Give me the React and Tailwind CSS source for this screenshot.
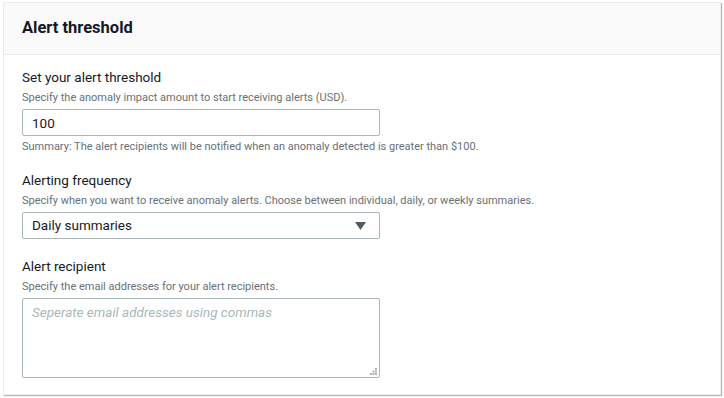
import React from 'react';

const Field = ({ label, hint, children, footer, className = '' }) => (
    <div className={`flex flex-col ${className}`}>
        <label className="text-[13.5px] leading-[20px] text-[#16191f]">{label}</label>
        <p className="text-[11px] leading-[16px] text-[#687078] mt-[3px]">{hint}</p>
        <div className="mt-[3px]">{children}</div>
        {footer && <p className="text-[11px] leading-[16px] text-[#687078] mt-[3px]">{footer}</p>}
    </div>
);

const App = () => {
    return (
        <div className="w-[724px] h-[398px] bg-white pt-[2px] pl-[3px] pr-[3px]" style={{ fontFamily: 'Roboto, "Noto Sans", sans-serif' }}>
            <div className="h-[393px] border border-[#eaeded] shadow-[1px_1px_1px_0_rgba(0,28,36,0.3)] bg-white">
                {/* Header */}
                <div className="h-[52px] bg-[#fafafa] border-b border-[#eaeded] flex items-center px-[18px]">
                    <h2 className="text-[16.5px] font-bold text-[#16191f]">Alert threshold</h2>
                </div>

                <div className="px-[18px] pt-[12px] flex flex-col">
                    <Field
                        label="Set your alert threshold"
                        hint="Specify the anomaly impact amount to start receiving alerts (USD)."
                        footer="Summary: The alert recipients will be notified when an anomaly detected is greater than $100."
                    >
                        <input
                            type="text"
                            defaultValue="100"
                            className="block w-[358px] h-[27px] border border-[#aab7b8] rounded-[2px] px-[9px] text-[13.5px] text-[#16191f] outline-none"
                        />
                    </Field>

                    <Field
                        className="mt-[15px]"
                        label="Alerting frequency"
                        hint="Specify when you want to receive anomaly alerts. Choose between individual, daily, or weekly summaries."
                    >
                        <div className="w-[358px] h-[27px] border border-[#aab7b8] rounded-[2px] px-[9px] flex items-center justify-between text-[13.5px] text-[#16191f]">
                            <span>Daily summaries</span>
                            <svg width="11" height="8" viewBox="0 0 11 8" className="mr-[4px]">
                                <path d="M0 0 H11 L5.5 8 Z" fill="#545b64" />
                            </svg>
                        </div>
                    </Field>

                    <Field
                        className="mt-[17px]"
                        label="Alert recipient"
                        hint="Specify the email addresses for your alert recipients."
                    >
                        <div className="relative w-[358px]">
                            <textarea
                                placeholder="Seperate email addresses using commas"
                                className="block w-[358px] h-[80px] border border-[#aab7b8] rounded-[2px] px-[9px] py-[3px] text-[13.5px] text-[#16191f] italic placeholder:text-[#aab7b8] outline-none resize-none"
                            />
                            {/* resize grip */}
                            <svg width="7" height="7" viewBox="0 0 7 7" className="absolute right-[3px] bottom-[3px]">
                                <rect x="5" y="0" width="2" height="2" fill="#aab7b8" />
                                <rect x="2.5" y="2.5" width="2" height="2" fill="#aab7b8" />
                                <rect x="5" y="2.5" width="2" height="2" fill="#aab7b8" />
                                <rect x="0" y="5" width="2" height="2" fill="#aab7b8" />
                                <rect x="2.5" y="5" width="2" height="2" fill="#aab7b8" />
                                <rect x="5" y="5" width="2" height="2" fill="#aab7b8" />
                            </svg>
                        </div>
                    </Field>
                </div>
            </div>
        </div>
    );
};

export default App;
